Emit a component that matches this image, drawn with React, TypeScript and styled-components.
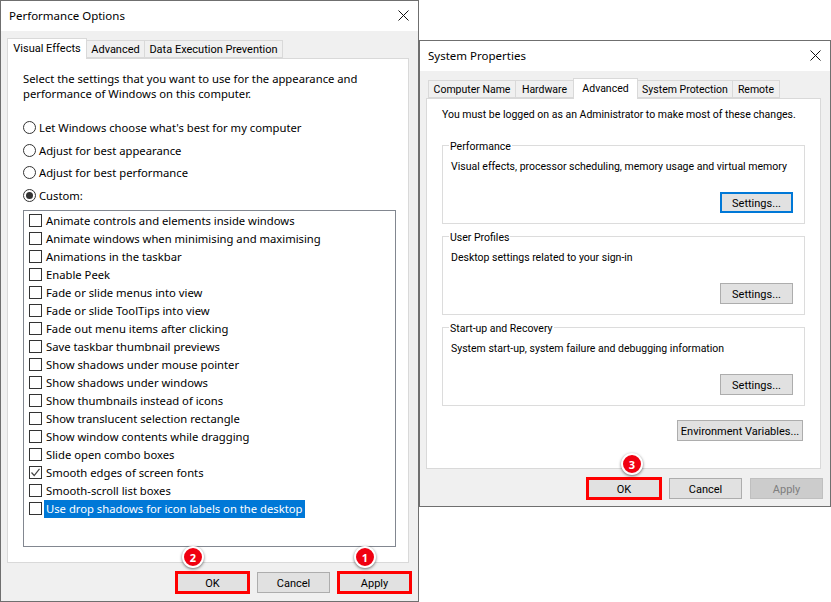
import React from "react";
import styled, { createGlobalStyle } from "styled-components";

const effects = [
  "Animate controls and elements inside windows",
  "Animate windows when minimising and maximising",
  "Animations in the taskbar",
  "Enable Peek",
  "Fade or slide menus into view",
  "Fade or slide ToolTips into view",
  "Fade out menu items after clicking",
  "Save taskbar thumbnail previews",
  "Show shadows under mouse pointer",
  "Show shadows under windows",
  "Show thumbnails instead of icons",
  "Show translucent selection rectangle",
  "Show window contents while dragging",
  "Slide open combo boxes",
  "Smooth edges of screen fonts",
  "Smooth-scroll list boxes",
  "Use drop shadows for icon labels on the desktop",
];

const GlobalStyle = createGlobalStyle`
  html, body {
    margin: 0;
    background: #fff;
  }
  body {
    font-family: "Noto Sans", "Open Sans", sans-serif;
    font-size: 11.25px;
    color: #000;
  }
`;

const Desktop = styled.div`
  position: relative;
  width: 831px;
  height: 602px;
  overflow: hidden;
`;

const Window = styled.div<{ $left: number; $top: number; $width: number; $height: number; $compact?: boolean }>`
  position: absolute;
  left: ${(p) => p.$left}px;
  top: ${(p) => p.$top}px;
  width: ${(p) => p.$width}px;
  height: ${(p) => p.$height}px;
  box-sizing: border-box;
  border: 1px solid #6f6f6f;
  display: flex;
  flex-direction: column;
  background: #f0f0f0;
  ${(p) => p.$compact && `font-family: Roboto, sans-serif; font-size: 10.5px;`}
`;

const TitleBar = styled.div`
  height: 30px;
  flex: none;
  background: #fff;
  display: flex;
  align-items: center;
  justify-content: space-between;
  padding: 0 9px 2px 8px;
  box-sizing: border-box;
  font-family: "Noto Sans", sans-serif;
  font-size: 11.5px;
`;

const Body = styled.div`
  padding: 7px 0 0 6px;
`;

const TabRow = styled.div<{ $size: number }>`
  display: flex;
  align-items: flex-end;
  height: 20px;
  font-family: Roboto, sans-serif;
  font-size: ${(p) => p.$size}px;
`;

const Tab = styled.div<{ $width: number; $active?: boolean; $inset?: number }>`
  box-sizing: border-box;
  width: ${(p) => p.$width}px;
  margin-left: ${(p) => p.$inset ?? 0}px;
  height: ${(p) => (p.$active ? 21 : 18)}px;
  margin-bottom: ${(p) => (p.$active ? -1 : 0)}px;
  position: relative;
  z-index: ${(p) => (p.$active ? 1 : 0)};
  background: ${(p) => (p.$active ? "#fff" : "#f0f0f0")};
  border: 1px solid #d9d9d9;
  border-bottom: ${(p) => (p.$active ? "none" : "1px solid #d9d9d9")};
  margin-right: -1px;
  display: flex;
  justify-content: center;
  padding-top: ${(p) => (p.$active ? 1 : 0)}px;
  line-height: 17px;
  white-space: nowrap;
`;

const Panel = styled.div<{ $width: number; $height: number; $pad: number }>`
  box-sizing: border-box;
  width: ${(p) => p.$width}px;
  height: ${(p) => p.$height}px;
  background: #fff;
  border: 1px solid #d9d9d9;
  display: flex;
  flex-direction: column;
  padding: ${(p) => p.$pad}px 15px 0 15px;
`;

const Intro = styled.p`
  margin: 0;
  line-height: 15px;
  white-space: nowrap;
`;

const RadioList = styled.div`
  margin-top: 15.25px;
  margin-bottom: 2.75px;
  display: grid;
  grid-auto-rows: 22.67px;
`;

const RadioRow = styled.div`
  display: flex;
  align-items: center;
  gap: 3px;
`;

const RadioDot = styled.span<{ $on?: boolean }>`
  box-sizing: border-box;
  width: 13px;
  height: 13px;
  border: 1px solid #333;
  border-radius: 50%;
  background: #fff;
  display: flex;
  align-items: center;
  justify-content: center;
  &::after {
    content: "";
    width: 7px;
    height: 7px;
    border-radius: 50%;
    background: ${(p) => (p.$on ? "#333" : "transparent")};
  }
`;

const ListBox = styled.div`
  box-sizing: border-box;
  width: 373px;
  height: 337px;
  border: 1px solid #828790;
  padding: 1px 0 0 5px;
`;

const ListRow = styled.div`
  height: 18px;
  display: flex;
  align-items: center;
`;

const CheckBox = styled.span`
  box-sizing: border-box;
  width: 13px;
  height: 13px;
  border: 1px solid #333;
  background: #fff;
  display: flex;
  flex: none;
  align-items: center;
  justify-content: center;
`;

const RowLabel = styled.span<{ $selected?: boolean }>`
  margin-left: 2px;
  padding: 0 2px;
  line-height: 18px;
  white-space: nowrap;
  background: ${(p) => (p.$selected ? "#0078d7" : "transparent")};
  color: ${(p) => (p.$selected ? "#fff" : "#000")};
`;

const Footer = styled.div<{ $top: number }>`
  display: flex;
  justify-content: flex-end;
  gap: 8px;
  margin-top: ${(p) => p.$top}px;
  padding-right: 7px;
`;

const Button = styled.div<{ $marked?: boolean; $focused?: boolean; $disabled?: boolean; $width?: number }>`
  box-sizing: border-box;
  width: ${(p) => p.$width ?? 73}px;
  height: 21px;
  padding-top: 1px;
  display: flex;
  align-items: center;
  justify-content: center;
  white-space: nowrap;
  font-family: Roboto, sans-serif;
  font-size: 11px;
  background: ${(p) => (p.$disabled ? "#cccccc" : "#e1e1e1")};
  color: ${(p) => (p.$disabled ? "#7e7e7e" : "#000")};
  border: ${(p) =>
    p.$focused ? "2px solid #0078d7" : p.$disabled ? "1px solid #bfbfbf" : "1px solid #adadad"};
  outline: ${(p) => (p.$marked ? "3px solid #ff0000" : "none")};
  outline-offset: -2px;
`;

const Group = styled.div`
  box-sizing: border-box;
  height: 79px;
  border: 1px solid #dcdcdc;
  display: flex;
  flex-direction: column;
  padding: 0 11px 0 8px;
`;

const GroupStack = styled.div`
  margin-top: 23px;
  display: grid;
  grid-template-columns: minmax(0, 1fr);
  gap: 12px;
`;

const Legend = styled.div`
  align-self: flex-start;
  margin: -7px 0 0 -2px;
  padding: 0 1px;
  line-height: 15px;
  background: #fff;
`;

const GroupText = styled.div`
  margin-top: 5px;
  line-height: 15px;
  white-space: nowrap;
`;

const GroupAction = styled.div`
  margin-top: 18px;
  display: flex;
  justify-content: flex-end;
`;

const EnvRow = styled.div`
  margin-top: 14px;
  display: flex;
  justify-content: flex-end;
  padding-right: 2px;
`;

const Badge = styled.span<{ $left: number; $top: number }>`
  position: absolute;
  left: ${(p) => p.$left}px;
  top: ${(p) => p.$top}px;
  box-sizing: border-box;
  width: 22px;
  height: 22px;
  border-radius: 50%;
  border: 2.5px solid #fff;
  background: #f00010;
  color: #fff;
  font-family: "Noto Sans", sans-serif;
  font-size: 11px;
  font-weight: 700;
  display: flex;
  align-items: center;
  justify-content: center;
  box-shadow: 0 1px 3px rgba(0, 0, 0, 0.55);
  z-index: 3;
`;

const CloseIcon = () => (
  <svg width="11" height="11" viewBox="0 0 11 11">
    <path d="M0.5 0.5L10.5 10.5M10.5 0.5L0.5 10.5" stroke="#111" strokeWidth="1" fill="none" />
  </svg>
);

const CheckMark = () => (
  <svg width="11" height="11" viewBox="0 0 11 11">
    <path d="M1.5 5.5L4.2 8.5L9.5 1.8" stroke="#444" strokeWidth="1.2" fill="none" />
  </svg>
);

function PerformanceOptions() {
  return (
    <Window $left={0} $top={0} $width={419} $height={602}>
      <TitleBar>
        Performance Options
        <CloseIcon />
      </TitleBar>
      <Body>
        <TabRow $size={11}>
          <Tab $width={80} $active>Visual Effects</Tab>
          <Tab $width={59}>Advanced</Tab>
          <Tab $width={139}>Data Execution Prevention</Tab>
        </TabRow>
        <Panel $width={402} $height={505} $pad={12}>
          <Intro>
            Select the settings that you want to use for the appearance and
            <br />
            performance of Windows on this computer.
          </Intro>
          <RadioList>
            <RadioRow><RadioDot />Let Windows choose what's best for my computer</RadioRow>
            <RadioRow><RadioDot />Adjust for best appearance</RadioRow>
            <RadioRow><RadioDot />Adjust for best performance</RadioRow>
            <RadioRow><RadioDot $on />Custom:</RadioRow>
          </RadioList>
          <ListBox>
            {effects.map((label, i) => (
              <ListRow key={label}>
                <CheckBox>{i === 14 && <CheckMark />}</CheckBox>
                <RowLabel $selected={i === 16}>{label}</RowLabel>
              </ListRow>
            ))}
          </ListBox>
        </Panel>
        <Footer $top={9}>
          <Button $marked>OK</Button>
          <Button>Cancel</Button>
          <Button $marked>Apply</Button>
        </Footer>
      </Body>
      <Badge $left={181} $top={545}>2</Badge>
      <Badge $left={353} $top={545}>1</Badge>
    </Window>
  );
}

function SystemProperties() {
  return (
    <Window $left={419} $top={40} $width={412} $height={467} $compact>
      <TitleBar>
        System Properties
        <CloseIcon />
      </TitleBar>
      <Body>
        <TabRow $size={10.5}>
          <Tab $width={88} $inset={2}>Computer Name</Tab>
          <Tab $width={59}>Hardware</Tab>
          <Tab $width={65} $active>Advanced</Tab>
          <Tab $width={96}>System Protection</Tab>
          <Tab $width={48}>Remote</Tab>
        </TabRow>
        <Panel $width={395} $height={371} $pad={8}>
          <Intro>You must be logged on as an Administrator to make most of these changes.</Intro>
          <GroupStack>
            <Group>
              <Legend>Performance</Legend>
              <GroupText>Visual effects, processor scheduling, memory usage and virtual memory</GroupText>
              <GroupAction><Button $focused>Settings...</Button></GroupAction>
            </Group>
            <Group>
              <Legend>User Profiles</Legend>
              <GroupText>Desktop settings related to your sign-in</GroupText>
              <GroupAction><Button>Settings...</Button></GroupAction>
            </Group>
            <Group>
              <Legend>Start-up and Recovery</Legend>
              <GroupText>System start-up, system failure and debugging information</GroupText>
              <GroupAction><Button>Settings...</Button></GroupAction>
            </Group>
          </GroupStack>
          <EnvRow><Button $width={126}>Environment Variables...</Button></EnvRow>
        </Panel>
        <Footer $top={9}>
          <Button $marked $width={74}>OK</Button>
          <Button>Cancel</Button>
          <Button $disabled>Apply</Button>
        </Footer>
      </Body>
      <Badge $left={201} $top={412}>3</Badge>
    </Window>
  );
}

export default function App() {
  return (
    <Desktop>
      <GlobalStyle />
      <PerformanceOptions />
      <SystemProperties />
    </Desktop>
  );
}
